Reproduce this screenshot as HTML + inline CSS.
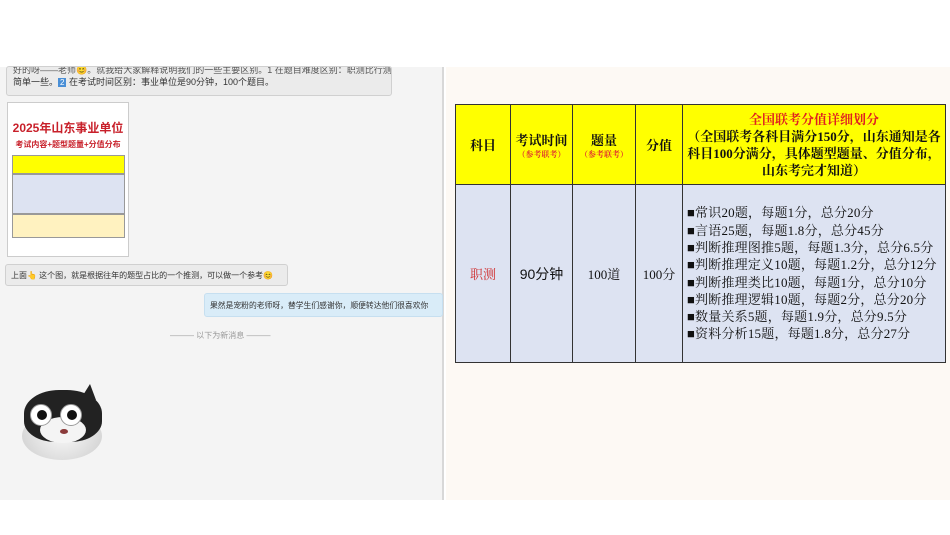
<!DOCTYPE html>
<html><head><meta charset="utf-8"><style>
*{margin:0;padding:0;box-sizing:border-box}
body{width:950px;height:535px;background:#fff;position:relative;overflow:hidden;font-family:"Liberation Sans","Noto Sans CJK SC",sans-serif}
.left{position:absolute;left:0;top:67px;width:444px;height:433px;background:#f4f4f4;border-right:2px solid #d8d8d8}
.right{position:absolute;left:446px;top:67px;width:504px;height:433px;background:#fdf9f4}
.bub{position:absolute;background:#ebebeb;border:1px solid #d0d0d0;border-radius:3px;font-size:9px;color:#333;white-space:nowrap;overflow:hidden}
table{position:absolute;left:455px;top:104px;width:491px;height:259px;border-collapse:collapse;font-family:"Liberation Serif","Noto Serif CJK SC",serif}
td{border:1px solid #333;text-align:center;vertical-align:middle;color:#111}
.h td{background:#ffff00;font-weight:bold;font-size:13px;height:80px}
.b td{background:#dde3f2;font-size:13px}
.sm{color:#e03030;font-size:8px;display:block}
.list{text-align:left;padding-left:4px;line-height:17.3px;font-size:13px;letter-spacing:0.2px}
</style></head><body>
<div class="left"></div>
<div class="right"></div>
<div class="bub" style="left:6px;top:66px;width:386px;height:30px;padding:0 6px;line-height:12px">
<div style="margin-top:-3px;color:#555">好的呀——老师😊。就我给大家解释说明我们的一些主要区别。1 在题目难度区别：职测比行测稍微</div>
<div>简单一些。<span style="background:#4a8fd6;color:#fff;padding:0 2px;font-size:8px">2</span> 在考试时间区别：事业单位是90分钟，100个题目。</div></div>
<div style="position:absolute;left:7px;top:102px;width:122px;height:155px;background:#fff;border:1px solid #ccc">
<div style="text-align:center;color:#c8202a;font-weight:bold;font-size:12px;margin-top:16px">2025年山东事业单位</div>
<div style="text-align:center;color:#c8202a;font-weight:bold;font-size:8px;margin-top:3px">考试内容+题型题量+分值分布</div>
<div style="position:absolute;left:4px;top:52px;width:113px;height:19px;background:#ffff00;border:1px solid #999"></div>
<div style="position:absolute;left:4px;top:71px;width:113px;height:40px;background:#dde3f2;border:1px solid #999"></div>
<div style="position:absolute;left:4px;top:111px;width:113px;height:24px;background:#fff2c0;border:1px solid #999"></div>
</div>
<div class="bub" style="left:5px;top:264px;width:283px;height:22px;line-height:22px;padding-left:5px;font-size:8px">上面👆 这个图，就是根据往年的题型占比的一个推测，可以做一个参考😊</div>
<div class="bub" style="left:204px;top:293px;width:239px;height:24px;line-height:24px;padding-left:5px;background:#d9ecf8;border-color:#c6dff0;font-size:7.8px">果然是宠粉的老师呀，替学生们感谢你，顺便转达他们很喜欢你</div>
<div style="position:absolute;left:170px;top:330px;font-size:8px;color:#999">——— 以下为新消息 ———</div>
<div style="position:absolute;left:22px;top:384px;width:80px;height:76px">
<div style="position:absolute;left:0;top:28px;width:80px;height:48px;border-radius:50%;background:radial-gradient(circle at 50% 30%,#fff,#ccc)"></div>
<div style="position:absolute;left:2px;top:6px;width:78px;height:52px;border-radius:45% 45% 40% 40%;background:#222"></div>
<div style="position:absolute;left:18px;top:33px;width:46px;height:26px;border-radius:50%;background:#f4f4f4"></div>
<div style="position:absolute;left:8px;top:20px;width:22px;height:22px;border-radius:50%;background:#fff;border:1px solid #999"></div>
<div style="position:absolute;left:38px;top:20px;width:22px;height:22px;border-radius:50%;background:#fff;border:1px solid #999"></div>
<div style="position:absolute;left:15px;top:26px;width:10px;height:10px;border-radius:50%;background:#111"></div>
<div style="position:absolute;left:45px;top:26px;width:10px;height:10px;border-radius:50%;background:#111"></div>
<div style="position:absolute;left:58px;top:0;width:0;height:0;border-left:10px solid transparent;border-right:6px solid transparent;border-bottom:16px solid #222"></div>
<div style="position:absolute;left:38px;top:45px;width:8px;height:5px;border-radius:50%;background:#8a3a3a"></div>
</div>
<table>
<tr class="h"><td style="width:55px">科目</td><td style="width:62px">考试时间<span class="sm">（参考联考）</span></td><td style="width:63px">题量<span class="sm">（参考联考）</span></td><td style="width:47px">分值</td><td style="line-height:17px"><span style="color:#e02020">全国联考分值详细划分</span><br>（全国联考各科目满分150分，山东通知是各科目100分满分，具体题型题量、分值分布，山东考完才知道）</td></tr>
<tr class="b"><td style="color:#d03030">职测</td><td style="font-family:'Liberation Sans','Noto Sans CJK SC',sans-serif;font-size:14px">90分钟</td><td>100道</td><td>100分</td><td class="list">■常识20题，每题1分，总分20分<br>■言语25题，每题1.8分，总分45分<br>■判断推理图推5题，每题1.3分，总分6.5分<br>■判断推理定义10题，每题1.2分，总分12分<br>■判断推理类比10题，每题1分，总分10分<br>■判断推理逻辑10题，每题2分，总分20分<br>■数量关系5题，每题1.9分，总分9.5分<br>■资料分析15题，每题1.8分，总分27分</td></tr>
</table>
</body></html>
